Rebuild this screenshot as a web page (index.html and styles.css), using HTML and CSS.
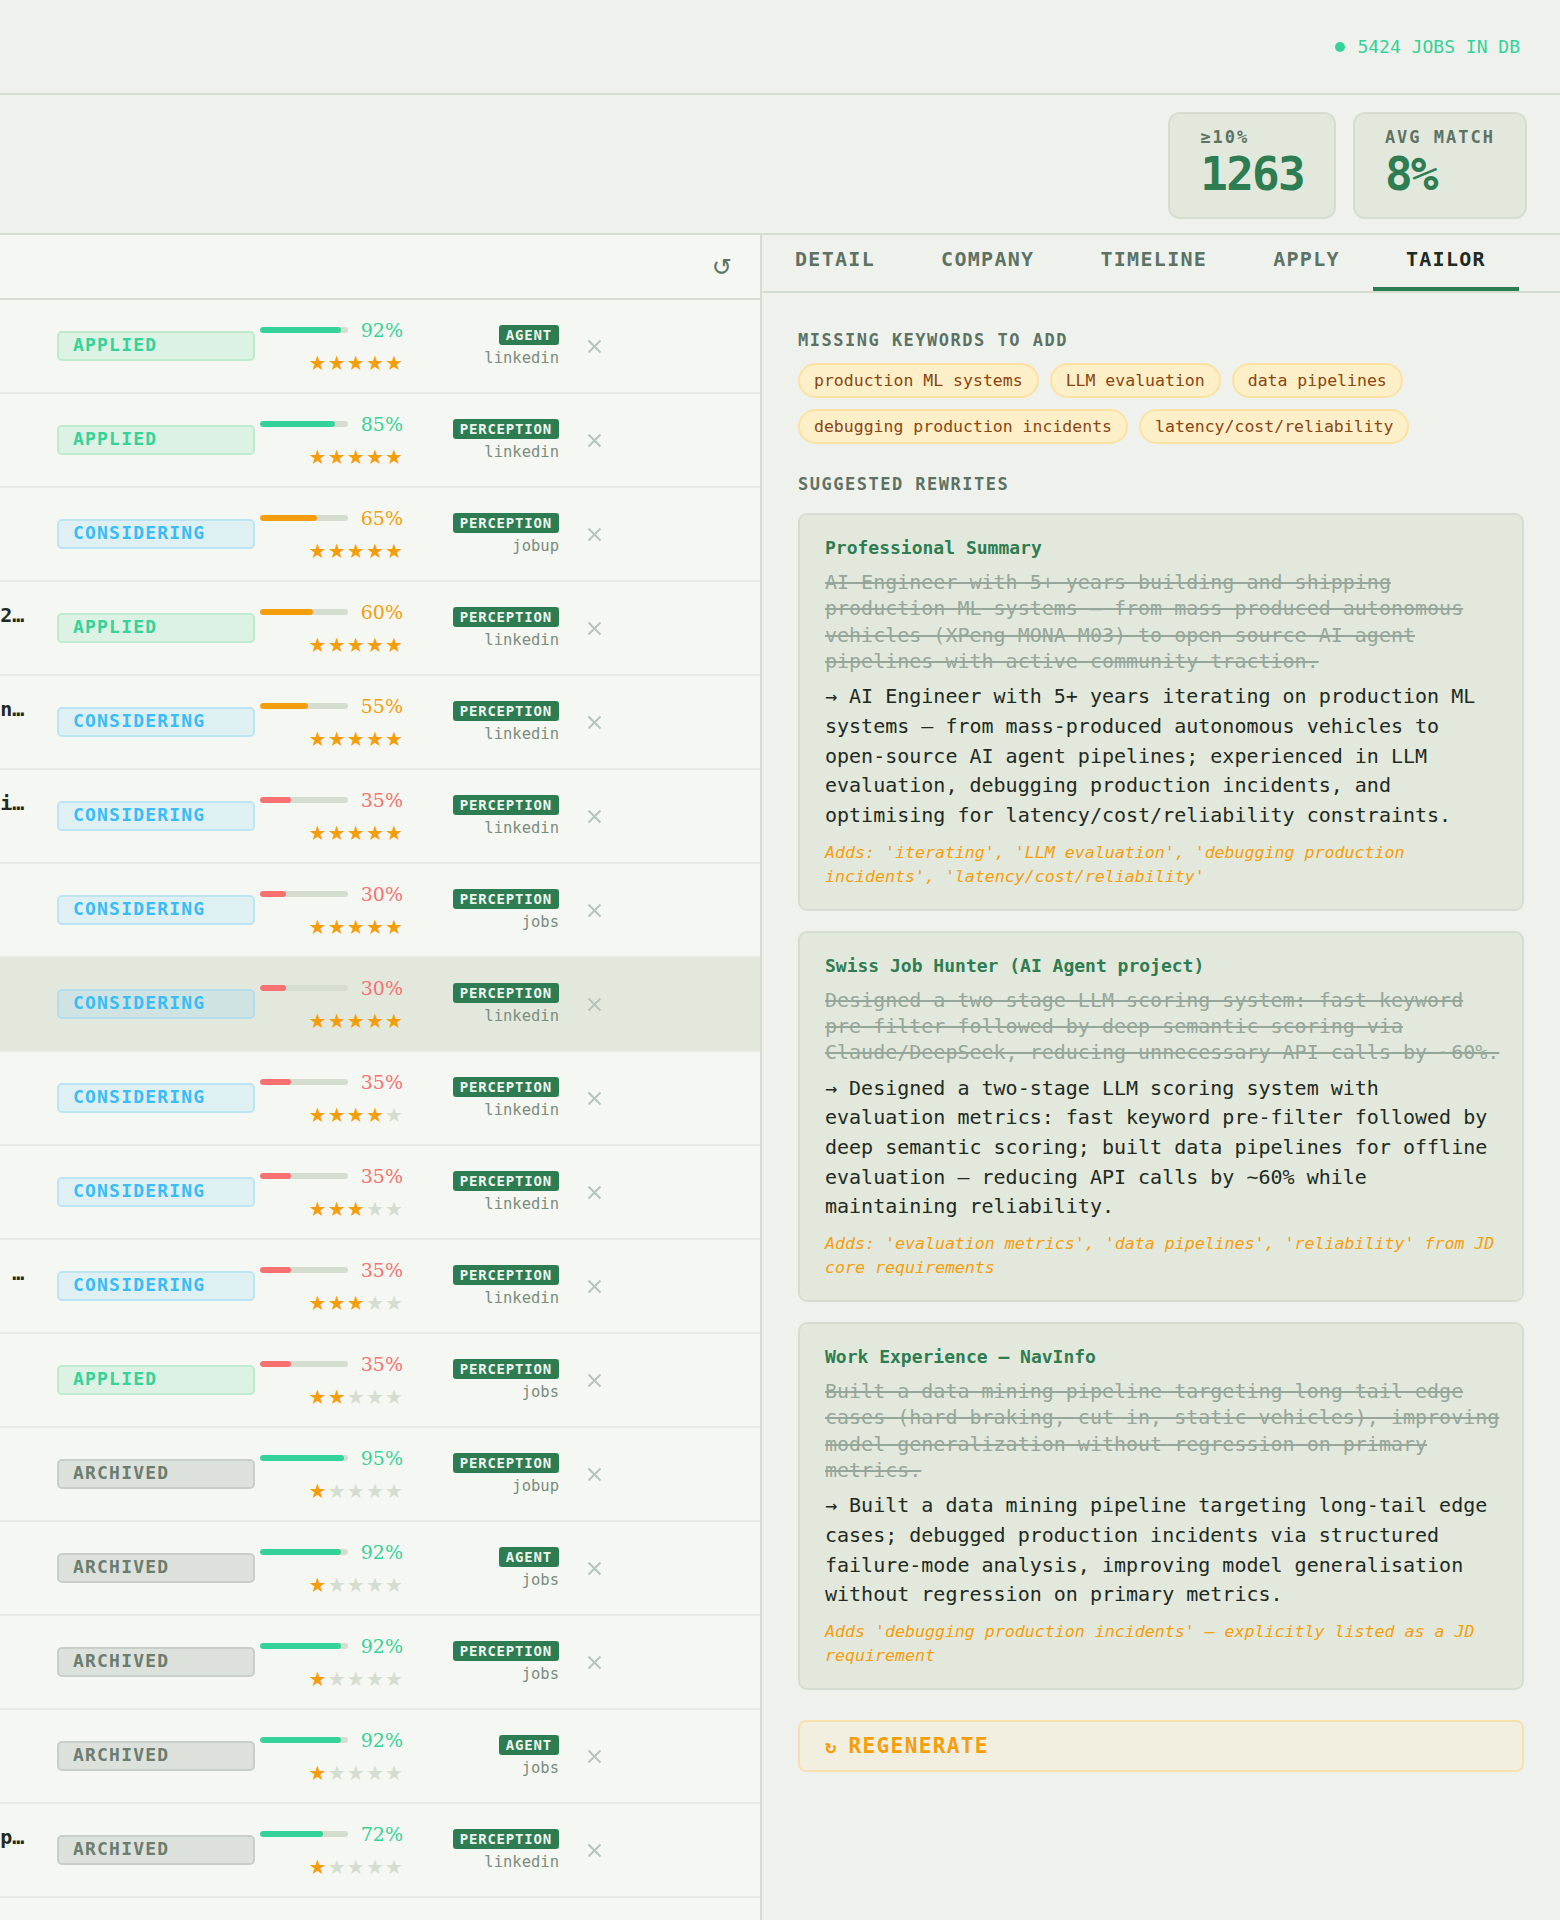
FILE: index.html
```html
<!DOCTYPE html>
<html lang="en">
<head>
    <meta charset="UTF-8">
    <meta name="viewport" content="width=device-width, initial-scale=1.0">
    <title>Job Hunter</title>
    <link rel="stylesheet" href="styles.css">
</head>
<body>
    <header class="topbar">
        <div class="db-count"><span class="dot"></span>5424 JOBS IN DB</div>
    </header>

    <div class="statsbar">
        <div class="stat">
            <div class="stat-label">≥10%</div>
            <div class="stat-value">1263</div>
        </div>
        <div class="stat">
            <div class="stat-label">AVG MATCH</div>
            <div class="stat-value">8%</div>
        </div>
    </div>

    <div class="main">
        <section class="jobs-panel">
            <div class="jobs-head">
                <button class="refresh" title="Reload">↺</button>
            </div>
            <div id="job-list"></div>
        </section>

        <section class="detail-panel">
            <nav class="tabs">
                <a class="tab">DETAIL</a>
                <a class="tab">COMPANY</a>
                <a class="tab">TIMELINE</a>
                <a class="tab">APPLY</a>
                <a class="tab active">TAILOR</a>
            </nav>

            <div class="tailor">
                <h3 class="section-title">MISSING KEYWORDS TO ADD</h3>
                <div class="keywords">
                    <span class="keyword">production ML systems</span>
                    <span class="keyword">LLM evaluation</span>
                    <span class="keyword">data pipelines</span>
                    <span class="keyword">debugging production incidents</span>
                    <span class="keyword">latency/cost/reliability</span>
                </div>

                <h3 class="section-title rewrites-title">SUGGESTED REWRITES</h3>
                <div class="rewrites">
                    <div class="rewrite">
                        <div class="rewrite-section">Professional Summary</div>
                        <p class="rewrite-old">AI Engineer with 5+ years building and shipping production ML systems — from mass-produced autonomous vehicles (XPeng MONA M03) to open-source AI agent pipelines with active community traction.</p>
                        <p class="rewrite-new">→ AI Engineer with 5+ years iterating on production ML systems — from mass-produced autonomous vehicles to open-source AI agent pipelines; experienced in LLM evaluation, debugging production incidents, and optimising for latency/cost/reliability constraints.</p>
                        <p class="rewrite-why">Adds: 'iterating', 'LLM evaluation', 'debugging production incidents', 'latency/cost/reliability'</p>
                    </div>
                    <div class="rewrite">
                        <div class="rewrite-section">Swiss Job Hunter (AI Agent project)</div>
                        <p class="rewrite-old">Designed a two-stage LLM scoring system: fast keyword pre-filter followed by deep semantic scoring via Claude/DeepSeek, reducing unnecessary API calls by ~60%.</p>
                        <p class="rewrite-new">→ Designed a two-stage LLM scoring system with evaluation metrics: fast keyword pre-filter followed by deep semantic scoring; built data pipelines for offline evaluation — reducing API calls by ~60% while maintaining reliability.</p>
                        <p class="rewrite-why">Adds: 'evaluation metrics', 'data pipelines', 'reliability' from JD core requirements</p>
                    </div>
                    <div class="rewrite">
                        <div class="rewrite-section">Work Experience — NavInfo</div>
                        <p class="rewrite-old">Built a data mining pipeline targeting long-tail edge cases (hard braking, cut-in, static vehicles), improving model generalization without regression on primary metrics.</p>
                        <p class="rewrite-new">→ Built a data mining pipeline targeting long-tail edge cases; debugged production incidents via structured failure-mode analysis, improving model generalisation without regression on primary metrics.</p>
                        <p class="rewrite-why">Adds 'debugging production incidents' — explicitly listed as a JD requirement</p>
                    </div>
                </div>

                <button class="regenerate"><span class="regen-icon">↻</span>REGENERATE</button>
            </div>
        </section>
    </div>

    <script>
        // title, company, status, match %, stars, team, source
        const jobs = [
            ["ML Engineer", "Scandit", "applied", 92, 5, "agent", "linkedin"],
            ["AI Engineer", "Wayve", "applied", 85, 5, "perception", "linkedin"],
            ["Computer Vision Engineer", "Sony", "considering", 65, 5, "perception", "jobup"],
            ["Perception Engineer, Zurich 2 (ADAS)", "Bosch", "applied", 60, 5, "perception", "linkedin"],
            ["Machine Learning Engineer, Inference Platform", "Logitech", "considering", 55, 5, "perception", "linkedin"],
            ["Machine Learning Engineer, Video AI", "Disney Research", "considering", 35, 5, "perception", "linkedin"],
            ["Perception Engineer", "Zenseact", "considering", 30, 5, "perception", "jobs"],
            ["Senior Perception Engineer", "Mobileye", "considering", 30, 5, "perception", "linkedin"],
            ["Robotics Engineer", "ANYbotics", "considering", 35, 4, "perception", "linkedin"],
            ["3D Vision Engineer", "Magic Leap", "considering", 35, 3, "perception", "linkedin"],
            ["Senior Software Engineer, AI Team Lead", "Huawei", "considering", 35, 3, "perception", "linkedin"],
            ["Autonomy Engineer", "Auterion", "applied", 35, 2, "perception", "jobs"],
            ["AI Agent Developer", "Unique", "archived", 95, 1, "perception", "jobup"],
            ["LLM Engineer", "Swisscom", "archived", 92, 1, "agent", "jobs"],
            ["Perception ML Engineer", "Verity", "archived", 92, 1, "perception", "jobs"],
            ["Agentic AI Engineer", "UBS", "archived", 92, 1, "agent", "jobs"],
            ["Research Engineer, Edge AI Optimization", "Sonova", "archived", 72, 1, "perception", "linkedin"],
            ["Vision Engineer", "Cognex", "considering", 45, 2, "perception", "linkedin"]
        ];
        const selected = 7;

        function level(match) {
            if (match >= 70) return "high";
            if (match >= 40) return "mid";
            return "low";
        }

        function stars(count) {
            let html = "";
            for (let i = 0; i < 5; i++) {
                html += '<span class="star' + (i < count ? " on" : "") + '">★</span>';
            }
            return html;
        }

        const list = document.getElementById("job-list");
        jobs.forEach(function (job, i) {
            const row = document.createElement("div");
            row.className = "job-row" + (i === selected ? " selected" : "");
            row.innerHTML =
                '<div class="job-title"><div class="title">' + job[0] + '</div><div class="company">' + job[1] + '</div></div>' +
                '<div class="status ' + job[2] + '">' + job[2].toUpperCase() + '</div>' +
                '<div class="match ' + level(job[3]) + '">' +
                    '<div class="match-line"><div class="bar"><div class="fill" style="width:' + job[3] + '%"></div></div>' +
                    '<span class="pct">' + job[3] + '%</span></div>' +
                    '<div class="stars">' + stars(job[4]) + '</div>' +
                '</div>' +
                '<div class="tags"><span class="team">' + job[5].toUpperCase() + '</span><span class="source">' + job[6] + '</span></div>' +
                '<button class="dismiss"><svg width="15" height="15" viewBox="0 0 15 15"><path d="M1.5 1.5 L13.5 13.5 M13.5 1.5 L1.5 13.5" stroke="#b6c4ba" stroke-width="2" fill="none"/></svg></button>';
            list.appendChild(row);
        });
    </script>
</body>
</html>
```

FILE: styles.css
```css
* {
    margin: 0;
    padding: 0;
    box-sizing: border-box;
}

body {
    font-family: "DejaVu Sans Mono", monospace;
    background-color: #eff2ec;
    color: #1f2a22;
    width: 1560px;
    overflow: hidden;
}

button {
    font-family: inherit;
    background: none;
    border: none;
    cursor: pointer;
}

/* barra superior */
.topbar {
    height: 95px;
    border-bottom: 2px solid #d5ddd1;
    display: flex;
    justify-content: flex-end;
    align-items: center;
    padding-right: 40px;
}

.db-count {
    display: flex;
    align-items: center;
    gap: 12px;
    font-size: 18px;
    color: #34d399;
}

.dot {
    width: 10px;
    height: 10px;
    border-radius: 50%;
    background-color: #34d399;
}

/* contadores */
.statsbar {
    height: 140px;
    border-bottom: 2px solid #d5ddd1;
    display: flex;
    justify-content: flex-end;
    align-items: flex-start;
    gap: 17px;
    padding: 17px 33px 0 0;
}

.stat {
    background-color: #e2e8dc;
    border: 2px solid #d5ddd1;
    border-radius: 12px;
    padding: 12px 30px 20px;
}

.stat-label {
    font-size: 17px;
    line-height: 23px;
    font-weight: bold;
    letter-spacing: 2px;
    color: #5d7265;
    margin-bottom: 2px;
}

.stat-value {
    font-size: 46px;
    line-height: 46px;
    font-weight: bold;
    letter-spacing: -1.8px;
    color: #2e7d52;
}

.main {
    display: flex;
    min-height: 1685px;
}

/* lista de ofertas */
.jobs-panel {
    width: 762px;
    flex-shrink: 0;
    background-color: #f5f7f2;
    border-right: 2px solid #d5ddd1;
    overflow: hidden;
}

.jobs-head {
    height: 65px;
    border-bottom: 2px solid #d5ddd1;
    display: flex;
    justify-content: flex-end;
    align-items: center;
    padding-right: 28px;
}

.refresh {
    font-family: "DejaVu Sans", sans-serif;
    font-size: 24px;
    color: #5d7265;
}

.job-row {
    height: 94px;
    border-bottom: 2px solid #e7ebe4;
    display: flex;
    align-items: center;
}

.job-row.selected {
    background-color: #e2e8dc;
}

/* la columna del título queda casi toda fuera, a la izquierda */
.job-title {
    width: 362px;
    margin-left: -337px;
    flex-shrink: 0;
    display: flex;
    flex-direction: column;
    gap: 4px;
    white-space: nowrap;
}

.job-title .title,
.job-title .company {
    overflow: hidden;
    text-overflow: ellipsis;
}

.job-title .title {
    font-size: 20px;
    line-height: 26px;
    font-weight: bold;
}

.job-title .company {
    font-size: 15px;
    line-height: 22px;
    color: #7b8d80;
}

.status {
    margin-left: 32px;
    width: 198px;
    height: 30px;
    flex-shrink: 0;
    border: 2px solid;
    border-radius: 5px;
    padding: 0 14px 2px;
    font-size: 18px;
    line-height: 24px;
    font-weight: bold;
    letter-spacing: 1.2px;
}

.status.applied {
    background-color: #dcf2e4;
    border-color: #bfeacf;
    color: #34d399;
}

.status.considering {
    background-color: #dff0f3;
    border-color: #bde4f3;
    color: #38bdf8;
}

.job-row.selected .status.considering {
    background-color: #cfe3e3;
    border-color: #b5dcea;
}

.status.archived {
    background-color: #dde1dc;
    border-color: #c8cfc8;
    color: #6b7d70;
}

.match {
    margin-left: 5px;
    width: 143px;
    flex-shrink: 0;
    display: flex;
    flex-direction: column;
    gap: 11px;
}

.match-line {
    height: 24px;
    display: flex;
    justify-content: space-between;
    align-items: center;
}

.bar {
    width: 88px;
    height: 6px;
    border-radius: 3px;
    background-color: #d5ddd1;
    overflow: hidden;
}

.fill {
    height: 100%;
    border-radius: 3px;
}

.pct {
    font-family: "DejaVu Serif", serif;
    font-size: 19px;
    line-height: 24px;
}

.match.high .fill { background-color: #34d399; }
.match.high .pct { color: #34d399; }
.match.mid .fill { background-color: #f59e0b; }
.match.mid .pct { color: #f59e0b; }
.match.low .fill { background-color: #f87171; }
.match.low .pct { color: #f87171; }

.stars {
    height: 21px;
    display: flex;
    justify-content: flex-end;
    gap: 1.2px;
    font-family: "DejaVu Sans", sans-serif;
    font-size: 20px;
    line-height: 21px;
    color: #d5ddd1;
}

.star.on {
    color: #f59e0b;
}

.tags {
    width: 156px;
    flex-shrink: 0;
    display: flex;
    flex-direction: column;
    align-items: flex-end;
    gap: 4px;
}

.team {
    background-color: #2e7d52;
    color: #eef5ef;
    border-radius: 3px;
    padding: 0 7px;
    font-size: 14px;
    line-height: 20px;
    font-weight: bold;
    letter-spacing: 0.8px;
}

.source {
    font-size: 15.5px;
    line-height: 18px;
    color: #7b8d80;
}

.dismiss {
    margin-left: 28px;
    width: 15px;
    height: 15px;
    display: flex;
}

/* panel de detalle */
.detail-panel {
    flex: 1;
    background-color: #eff2ec;
}

.tabs {
    display: flex;
    border-bottom: 2px solid #d5ddd1;
}

.tab {
    height: 56px;
    padding: 10px 33px 0;
    border-bottom: 4px solid transparent;
    font-size: 20px;
    line-height: 28px;
    font-weight: bold;
    letter-spacing: 1.3px;
    color: #5d7265;
    cursor: pointer;
}

.tab.active {
    color: #1f2a22;
    border-bottom-color: #2e7d52;
}

.tailor {
    padding: 35px 36px 40px;
}

.section-title {
    font-size: 17px;
    line-height: 24px;
    font-weight: bold;
    letter-spacing: 1.5px;
    color: #5d7265;
}

.keywords {
    display: flex;
    flex-wrap: wrap;
    gap: 11px;
    margin-top: 11px;
}

.keyword {
    height: 35px;
    border: 2px solid #fbe1a3;
    border-radius: 18px;
    background-color: #fdefc7;
    color: #8a4512;
    padding: 0 14px;
    font-size: 16.5px;
    line-height: 31px;
}

.rewrites-title {
    margin-top: 28px;
}

.rewrites {
    margin-top: 17px;
    display: flex;
    flex-direction: column;
    gap: 20px;
}

.rewrite {
    background-color: #e2e8dc;
    border: 2px solid #d5ddd1;
    border-radius: 9px;
    padding: 20px 14px 20px 25px;
}

.rewrite-section {
    font-size: 18px;
    line-height: 26px;
    font-weight: bold;
    color: #2e7d52;
    margin-bottom: 8px;
}

.rewrite-old {
    font-size: 20px;
    line-height: 26.3px;
    color: #96a69a;
    text-decoration: line-through;
    margin-bottom: 8px;
}

.rewrite-new {
    font-size: 20px;
    line-height: 29.7px;
    color: #1f2a22;
    margin-bottom: 10px;
}

.rewrite-why {
    font-size: 16.6px;
    line-height: 24px;
    font-style: italic;
    color: #f59e0b;
}

.regenerate {
    margin-top: 30px;
    width: 100%;
    height: 52px;
    display: flex;
    align-items: center;
    gap: 12px;
    padding: 0 25px;
    background-color: #f3efe0;
    border: 2px solid #f7dfae;
    border-radius: 8px;
    color: #f59e0b;
    font-size: 21px;
    font-weight: bold;
    letter-spacing: 1.4px;
    text-align: left;
}

.regen-icon {
    font-size: 19px;
    letter-spacing: 0;
}
```
